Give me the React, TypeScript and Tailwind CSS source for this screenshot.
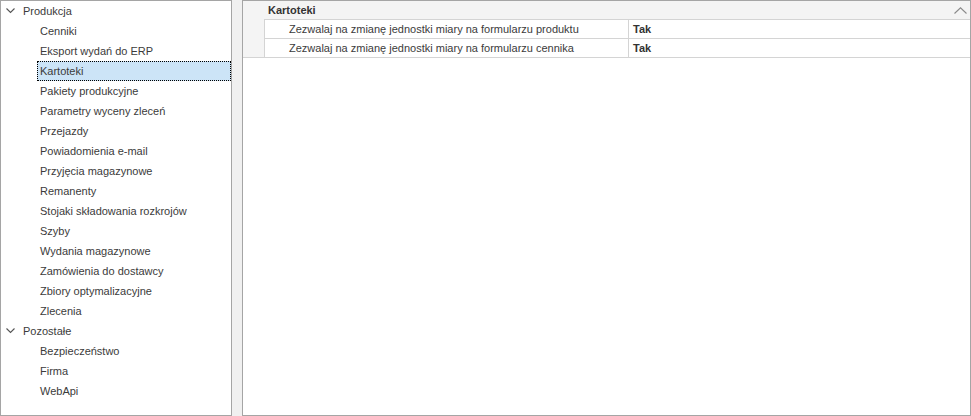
const tree = [
  {
    label: "Produkcja",
    children: [
      "Cenniki",
      "Eksport wydań do ERP",
      "Kartoteki",
      "Pakiety produkcyjne",
      "Parametry wyceny zleceń",
      "Przejazdy",
      "Powiadomienia e-mail",
      "Przyjęcia magazynowe",
      "Remanenty",
      "Stojaki składowania rozkrojów",
      "Szyby",
      "Wydania magazynowe",
      "Zamówienia do dostawcy",
      "Zbiory optymalizacyjne",
      "Zlecenia",
    ],
  },
  {
    label: "Pozostałe",
    children: ["Bezpieczeństwo", "Firma", "WebApi"],
  },
];

const rows = [
  "Zezwalaj na zmianę jednostki miary na formularzu produktu",
  "Zezwalaj na zmianę jednostki miary na formularzu cennika",
];

const ChevronDown = () => (
  <svg width="9" height="6" viewBox="0 0 9 6" className="shrink-0">
    <path d="M0.5 0.5 L4.5 4.5 L8.5 0.5" fill="none" stroke="#555" strokeWidth="1.1" />
  </svg>
);

const ChevronUp = () => (
  <svg width="13" height="7" viewBox="0 0 13 7">
    <path d="M0.5 6.5 L6.5 0.8 L12.5 6.5" fill="none" stroke="#8a8a8a" strokeWidth="1.1" />
  </svg>
);

export default function App() {
  return (
    <div
      className="flex h-[416px] w-[971px] gap-[10px] bg-[#f0f0f0] text-[11px] text-[#3b3b3b]"
      style={{ fontFamily: '"Liberation Sans", Arial, sans-serif' }}
    >
      {/* Drzewo */}
      <div className="h-full w-[232px] border border-[#a5a5a5] bg-white">
        {tree.map((group) => (
          <div key={group.label}>
            <div className="flex h-5 items-center pl-[5px]">
              <ChevronDown />
              <span className="ml-[8px]">{group.label}</span>
            </div>
            {group.children.map((c) => (
              <div
                key={c}
                className={
                  c === "Kartoteki"
                    ? "ml-[36px] flex h-5 items-center border border-dotted border-black bg-[#cce4f7] pl-[2px]"
                    : "ml-[36px] flex h-5 items-center pl-[3px]"
                }
              >
                {c}
              </div>
            ))}
          </div>
        ))}
      </div>

      {/* Właściwości */}
      <div className="flex h-full flex-1 flex-col border border-[#a5a5a5] bg-white">
        <div className="border-b border-[#d4d4d4] bg-[#f4f4f4]">
          <div className="flex h-[18px] items-center justify-between pl-[25px] pr-[3px]">
            <span className="font-bold text-[#333]">Kartoteki</span>
            <ChevronUp />
          </div>
          <div className="ml-[21px] border-l border-[#d4d4d4] bg-white">
            {rows.map((r, i) => (
              <div
                key={r}
                className={
                  i === 0
                    ? "flex h-[19px] border-t border-[#d4d4d4]"
                    : "flex h-[19px] border-t border-[#d4d4d4]"
                }
              >
                <div className="flex w-[364px] items-center border-r border-[#d4d4d4] pl-[24px]">{r}</div>
                <div className="flex items-center pl-[4px] font-bold text-[#333]">Tak</div>
              </div>
            ))}
          </div>
        </div>
      </div>
    </div>
  );
}
